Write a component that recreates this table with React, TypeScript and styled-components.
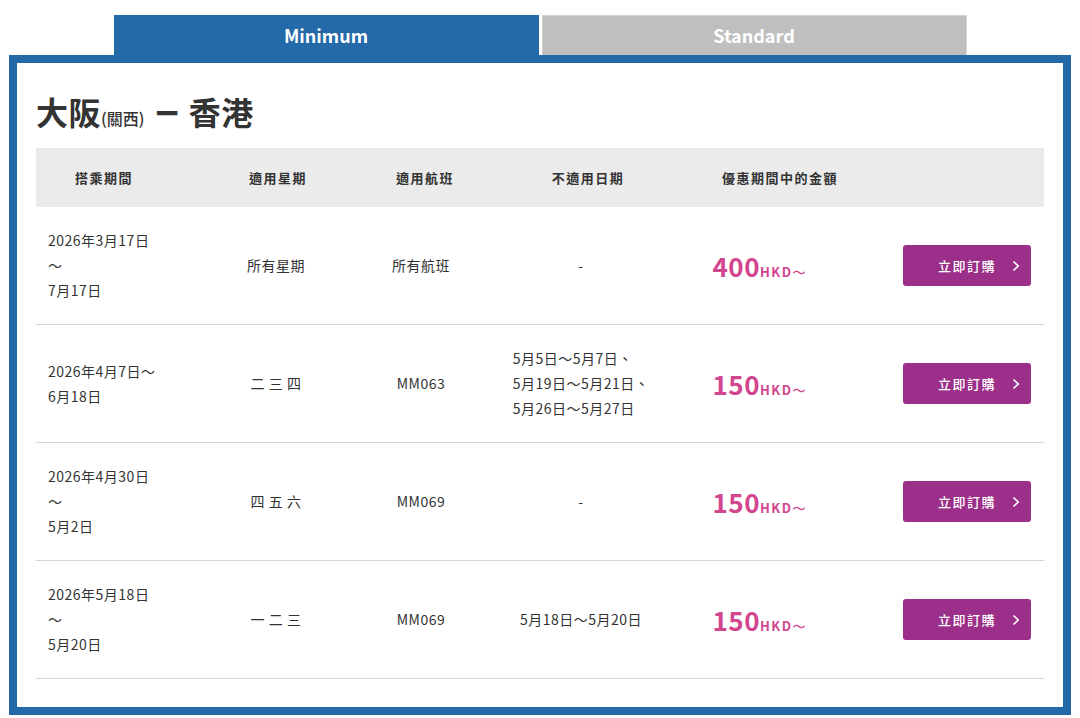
import React from "react";
import styled, { createGlobalStyle } from "styled-components";

const Global = createGlobalStyle`
  html, body { margin: 0; padding: 0; background: #fff; }
  body { font-family: "Noto Sans CJK TC", "Noto Sans", sans-serif; color: #333; }
  * { box-sizing: border-box; }
`;

const Page = styled.div`
  width: 1080px;
  padding-top: 15px;
  display: flex;
  flex-direction: column;
  align-items: center;
`;

const Tabs = styled.div`
  display: flex;
  gap: 3px;
  width: 853px;
`;

const Tab = styled.div<{ $active?: boolean }>`
  flex: 1;
  height: 40px;
  display: flex;
  align-items: center;
  justify-content: center;
  padding-bottom: 2px;
  font-size: 18px;
  font-weight: 700;
  color: #fff;
  background: ${(p) => (p.$active ? "#2469a8" : "#bfbfbf")};
  border: 1px solid ${(p) => (p.$active ? "#2469a8" : "#d3d3d3")};
  border-bottom: none;
`;

const Box = styled.div`
  width: 1062px;
  border: 8px solid #2469a8;
  padding: 0 19px 28px;
  background: #fff;
`;

const Title = styled.h2`
  margin: 0 0 17px;
  padding-top: 28px;
  height: 68px;
  font-size: 32px;
  line-height: 40px;
  font-weight: 700;
  color: #333;
  letter-spacing: 0.5px;
  white-space: nowrap;
`;

const Sub = styled.span`
  font-size: 16px;
  line-height: 1;
  font-weight: 500;
  letter-spacing: 0;
`;

const Dash = styled.span`
  display: inline-block;
  margin: 0 5px 0 -1px;
  line-height: 1;
  transform: scale(0.9, 1.3);
`;

const HeadRow = styled.div`
  display: grid;
  grid-template-columns: 136px 212px 82px 244px 140px 1fr;
  height: 59px;
  align-items: center;
  background: #ebebeb;
`;

const HeadCell = styled.div`
  text-align: center;
  font-size: 13px;
  font-weight: 700;
  letter-spacing: 1.5px;
  white-space: nowrap;
  color: #333;
`;

const Row = styled.div`
  display: grid;
  grid-template-columns: 136px 208px 82px 238px 118px 1fr;
  height: 118px;
  align-items: center;
  border-bottom: 1px solid #d6d6d6;
`;

const Cell = styled.div<{ $left?: boolean }>`
  font-size: 14px;
  line-height: 25px;
  letter-spacing: 0.5px;
  color: #333;
  white-space: nowrap;
  text-align: ${(p) => (p.$left ? "left" : "center")};
  padding-left: ${(p) => (p.$left ? "12px" : "0")};
`;

const Block = styled.div`
  display: inline-block;
  text-align: left;
`;

const Price = styled.div`
  display: flex;
  justify-content: center;
  align-items: baseline;
  color: #d2458f;
  font-weight: 700;
  white-space: nowrap;
`;

const Amount = styled.span`
  font-size: 26px;
  letter-spacing: 0.5px;
`;

const Currency = styled.span`
  font-size: 13px;
  letter-spacing: 1.5px;
`;

const Tilde = styled.span`
  font-weight: 500;
  letter-spacing: 0;
`;

const ActionCell = styled.div`
  display: flex;
  justify-content: flex-end;
  padding-right: 13px;
`;

const BuyButton = styled.button`
  position: relative;
  width: 128px;
  height: 41px;
  border: none;
  border-radius: 3px;
  background: #9b2f89;
  color: #fff;
  font-family: inherit;
  font-size: 13px;
  font-weight: 500;
  letter-spacing: 1.5px;
  display: flex;
  align-items: center;
  justify-content: center;
  padding: 0;
  cursor: pointer;
`;

const Chevron = styled.svg`
  position: absolute;
  right: 11px;
  top: 50%;
  transform: translateY(-50%);
`;

type RowData = {
  period: string[];
  days: string;
  flight: string;
  excluded: string[];
  price: string;
};

const rows: RowData[] = [
  {
    period: ["2026年3月17日", "～", "7月17日"],
    days: "所有星期",
    flight: "所有航班",
    excluded: ["-"],
    price: "400",
  },
  {
    period: ["2026年4月7日～", "6月18日"],
    days: "二 三 四",
    flight: "MM063",
    excluded: ["5月5日～5月7日、", "5月19日～5月21日、", "5月26日～5月27日"],
    price: "150",
  },
  {
    period: ["2026年4月30日", "～", "5月2日"],
    days: "四 五 六",
    flight: "MM069",
    excluded: ["-"],
    price: "150",
  },
  {
    period: ["2026年5月18日", "～", "5月20日"],
    days: "一 二 三",
    flight: "MM069",
    excluded: ["5月18日～5月20日"],
    price: "150",
  },
];

const headers = ["搭乘期間", "適用星期", "適用航班", "不適用日期", "優惠期間中的金額", ""];

export default function App() {
  return (
    <>
      <Global />
      <Page>
        <Tabs>
          <Tab $active>Minimum</Tab>
          <Tab>Standard</Tab>
        </Tabs>
        <Box>
          <Title>
            大阪<Sub>(關西)</Sub> <Dash>－</Dash>香港
          </Title>
          <HeadRow>
            {headers.map((h, i) => (
              <HeadCell key={i}>{h}</HeadCell>
            ))}
          </HeadRow>
          {rows.map((r, i) => (
            <Row key={i}>
              <Cell $left>
                {r.period.map((l, j) => (
                  <div key={j}>{l}</div>
                ))}
              </Cell>
              <Cell>{r.days}</Cell>
              <Cell>{r.flight}</Cell>
              <Cell>
                <Block>
                  {r.excluded.map((l, j) => (
                    <div key={j}>{l}</div>
                  ))}
                </Block>
              </Cell>
              <Price>
                <Amount>{r.price}</Amount>
                <Currency>
                  HKD<Tilde>～</Tilde>
                </Currency>
              </Price>
              <ActionCell>
                <BuyButton>
                  立即訂購
                  <Chevron width="8" height="12" viewBox="0 0 8 12">
                    <polyline
                      points="1.5,1.5 6.2,6 1.5,10.5"
                      fill="none"
                      stroke="#fff"
                      strokeWidth="1.6"
                    />
                  </Chevron>
                </BuyButton>
              </ActionCell>
            </Row>
          ))}
        </Box>
      </Page>
    </>
  );
}
